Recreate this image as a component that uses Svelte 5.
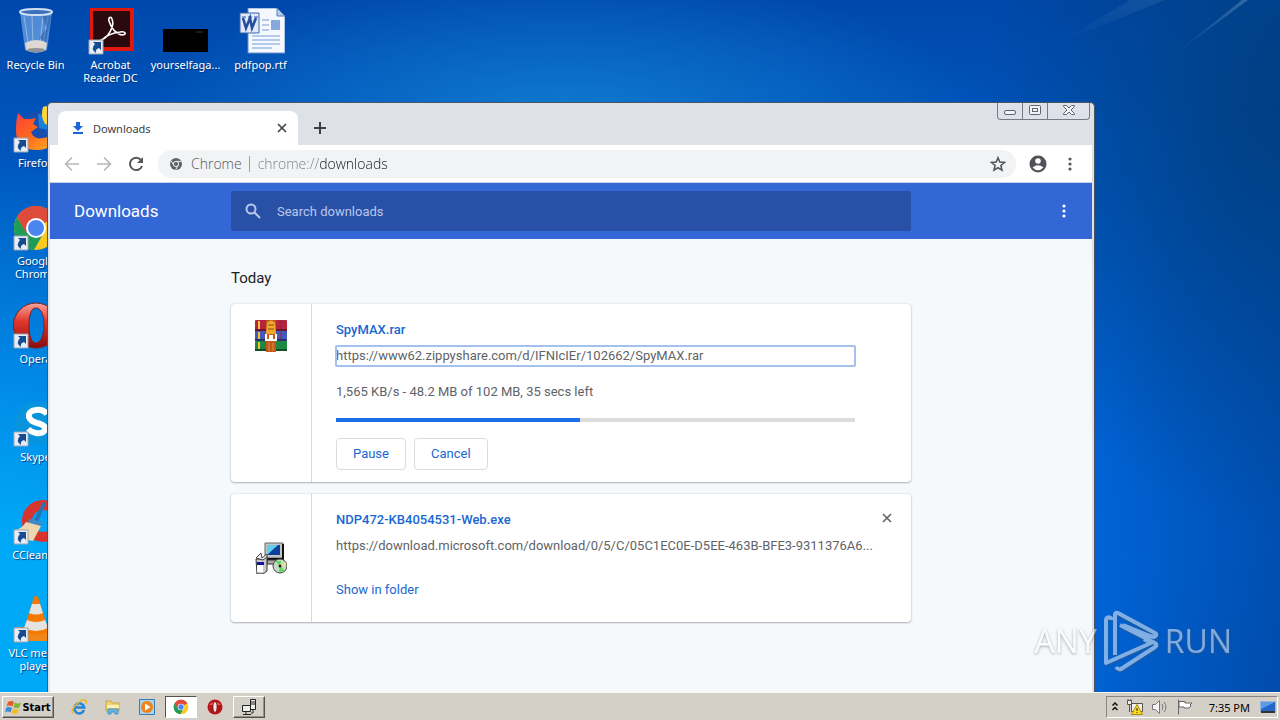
<script lang="ts">
	type Item = { id: string; label: string; shortcut?: boolean };

	const column: Item[] = [
		{ id: 'bin', label: 'Recycle Bin' },
		{ id: 'firefox', label: 'Firefox', shortcut: true },
		{ id: 'chrome', label: 'Google Chrome', shortcut: true },
		{ id: 'opera', label: 'Opera', shortcut: true },
		{ id: 'skype', label: 'Skype', shortcut: true },
		{ id: 'ccleaner', label: 'CCleaner', shortcut: true },
		{ id: 'vlc', label: 'VLC media player', shortcut: true }
	];
	const row: Item[] = [
		{ id: 'acrobat', label: 'Acrobat Reader DC', shortcut: true },
		{ id: 'black', label: 'yourselfaga...' },
		{ id: 'word', label: 'pdfpop.rtf' }
	];
	const quickLaunch = [
		{ id: 'ie', label: 'Internet Explorer' },
		{ id: 'explorer', label: 'Explorer' },
		{ id: 'media', label: 'Media Player' },
		{ id: 'chrome', label: 'Chrome', state: 'pressed' },
		{ id: 'opera', label: 'Opera' },
		{ id: 'network', label: 'Network', state: 'raised' }
	];

	let address = $state('chrome://downloads');
	let query = $state('');
	let paused = $state(false);
	let progress = $state(47);
</script>

{#snippet chromeLogo()}
	<circle cx="24" cy="24" r="22" fill="#fbc91f" />
	<path d="M24 24 5 13A22 22 0 0 1 43 13z" fill="#de4b3b" />
	<path d="M5 13A22 22 0 0 0 22 46l9-16-7-6-9 5z" fill="#1f9d58" />
	<path d="M24 13h19A22 22 0 0 0 5 13l9 16z" fill="#de4b3b" />
	<circle cx="24" cy="24" r="10" fill="#fff" />
	<circle cx="24" cy="24" r="8" fill="#4b86f0" />
{/snippet}

{#snippet desktopItem(item: Item)}
	<button class="item">
		<svg width="48" height="48" viewBox="0 0 48 48" aria-hidden="true">
			{#if item.id === 'bin'}
				<path d="M8 4h32l-5 38q-11 5-22 0z" fill="#6ea2e2" opacity=".75" />
				<path d="M12 8l4 27M20 8l1 28M31 8l-3 28M36 8l-5 28" stroke="#bcd5f2" opacity=".6" />
				<path d="M30 8h9l-5 26-7-4 8-10z" fill="#204f9b" opacity=".45" />
				<path d="M13 35q11-6 22 0l-1 7q-10 5-20 0z" fill="#ddd9d2" />
				<ellipse cx="24" cy="42" rx="9" ry="2" fill="#8f9194" />
				<ellipse cx="24" cy="4" rx="16" ry="3" fill="#3c70bd" stroke="#cfe0f2" stroke-width="2" />
			{:else if item.id === 'acrobat'}
				<path d="M3 0h44v43H3z" fill="#e0190f" />
				<path d="M6 3h37v36H6z" fill="#2a0a0d" />
				<path
					d="M14 32c7-2 14-14 11-21-1-3-4-2-3 2 2 7 7 13 13 14 5 0 4-4-2-3-7 1-13 3-17 7-2 2-3 3-2 1z"
					fill="none"
					stroke="#fff"
					stroke-width="1.6"
				/>
			{:else if item.id === 'black'}
				<path d="M1 21h45v23H1z" fill="#000" />
				<path d="M34 24h7" stroke="#343434" />
			{:else if item.id === 'word'}
				<path d="M11 0h29l8 8v37H11z" fill="#f4f8ff" stroke="#6b92cf" />
				<path d="M40 0v8h8z" fill="#b8cdef" stroke="#557db8" />
				<path d="M25 12h7M25 17h7M25 22h7M15 28h28M15 32h28M15 36h28M15 40h20" stroke="#779bd0" />
				<path d="M34 12h9v10h-9z" fill="#86a9df" />
				<path d="M3 5h19v20H3z" fill="#e1e9f8" stroke="#3d64a8" />
				<path d="M6 10l3 10 4-10 2 10 4-10" fill="none" stroke="#254f9d" stroke-width="2.600" />
				<path d="M5 9h4M11 9h4M17 9h4" stroke="#254f9d" />
			{:else if item.id === 'firefox'}
				<circle cx="27" cy="23" r="18" fill="#164fae" />
				<path d="M26 8q10-1 16 8l-6 8-9-2z" fill="#1b7fd6" />
				<path d="M31 1q-3 9 2 17l13 5Q47 5 34 0z" fill="#ffd43a" />
				<path
					d="M6 7l6 6h7l5-1-3 6 5 3-7 5q3 8 12 6 8-1 15-8-2 20-21 20Q4 44 4 25 4 13 6 7z"
					fill="url(#fire)"
				/>
			{:else if item.id === 'chrome'}
				{@render chromeLogo()}
			{:else if item.id === 'opera'}
				<path
					fill-rule="evenodd"
					d="M24 1a22 22 0 0 1 0 45 22 22 0 0 1 0-45zm0 5c-5 0-7 7-7 17s2 18 7 18 8-8 8-18-3-17-8-17z"
					fill="url(#operaRed)"
					stroke="#8c1a14"
				/>
			{:else if item.id === 'skype'}
				<rect x="4" y="2" width="42" height="42" rx="17" fill="#0794dd" />
				<path
					d="M35 14q-4-5-11-4-8 1-7 7 1 4 8 6 9 2 8 7-2 4-9 3-5-1-8-4"
					fill="none"
					stroke="#fff"
					stroke-width="6"
				/>
			{:else if item.id === 'ccleaner'}
				<circle cx="31" cy="23" r="16" fill="none" stroke="#d8332e" stroke-width="10" />
				<path d="M31 4l3 1-8 19-4-2z" fill="#2474b8" />
				<path d="M17 21l14 3-2 6-13-4z" fill="#3d8bc5" />
				<path d="M14 24l15 4-8 15q-12-1-19-11 8-1 12-8z" fill="#efd6ac" />
			{:else if item.id === 'vlc'}
				<path d="M5 31h38l4 14H2z" fill="#f08519" />
				<path d="M22 1q2-2 4 0l11 35q-13 5-26 0z" fill="#f57900" />
				<path d="M20 8h8l3 9q-7 3-14 0zM15 24q9 4 18 0l3 8q-12 6-24 0z" fill="#e5e3df" />
			{/if}
			{#if item.shortcut}
				<path d="M2 32h14v14H2z" fill="#e6edf7" stroke="#9ba5b3" />
				<path d="M6 34h8v8l-2-2q-4 1-3 5-6-4-1-9z" fill="#164a91" />
			{/if}
		</svg>
		<span>{item.label}</span>
	</button>
{/snippet}

{#snippet dots()}
	<svg width="16" height="16" viewBox="0 0 16 16" fill="currentColor" aria-hidden="true">
		<circle cx="8" cy="3" r="1.600" /><circle cx="8" cy="8" r="1.600" /><circle cx="8" cy="13" r="1.600" />
	</svg>
{/snippet}

{#snippet cross()}
	<svg width="10" height="10" viewBox="0 0 10 10" aria-hidden="true">
		<path d="M1 1l8 8M9 1L1 9" stroke="currentColor" stroke-width="1.600" />
	</svg>
{/snippet}

<svg class="defs" aria-hidden="true">
	<defs>
		<linearGradient id="operaRed" x1="0" y1="0" x2="0" y2="1">
			<stop offset="0" stop-color="#f7a7a0" />
			<stop offset=".4" stop-color="#e2382d" />
			<stop offset="1" stop-color="#8a0c0c" />
		</linearGradient>
		<linearGradient id="fire" x1="0" y1="0" x2="1" y2="1">
			<stop offset="0" stop-color="#ff3d3d" />
			<stop offset=".5" stop-color="#ff6b18" />
			<stop offset="1" stop-color="#ffb92d" />
		</linearGradient>
		<linearGradient id="ray" x1="1" y1="0" x2="0" y2="1">
			<stop offset="0" stop-color="#5f90bd" stop-opacity=".5" />
			<stop offset="1" stop-color="#5f90bd" stop-opacity="0" />
		</linearGradient>
	</defs>
</svg>

<div class="screen">
	<div class="desktop">
		<svg class="streaks" width="280" height="110" viewBox="0 0 280 110" aria-hidden="true">
			<path d="M248 0h-6L170 58z" fill="url(#ray)" />
			<path d="M165 0h-35L60 42z" fill="url(#ray)" opacity=".4" />
		</svg>
		<div class="items">
			<div class="column">
				{#each column as item}{@render desktopItem(item)}{/each}
			</div>
			{#each row as item}{@render desktopItem(item)}{/each}
		</div>

		<section class="window">
			<div class="tabstrip">
				<div class="tab">
					<svg width="12" height="12" viewBox="0 0 12 12" fill="#1a66d8" aria-hidden="true">
						<path d="M4 0h4v4h3L6 9 1 4h3zM1 10h10v2H1z" />
					</svg>
					<span>Downloads</span>
					<button aria-label="Close tab">{@render cross()}</button>
				</div>
				<button class="newtab" aria-label="New tab">
					<svg width="12" height="12" viewBox="0 0 12 12" aria-hidden="true">
						<path d="M6 0v12M0 6h12" stroke="#3c4043" stroke-width="2" />
					</svg>
				</button>
				<div class="caption">
					<button aria-label="Minimize">
						<svg width="12" height="16" viewBox="0 0 12 16"><rect x=".5" y="7.500" width="11" height="4" rx="1.500" /></svg>
					</button>
					<button aria-label="Restore">
						<svg width="12" height="16" viewBox="0 0 12 16">
							<rect x=".5" y="2.500" width="11" height="9" rx="1" /><rect x="3.500" y="5.500" width="5" height="3" />
						</svg>
					</button>
					<button class="close" aria-label="Close">
						<svg width="12" height="16" viewBox="0 0 12 16">
							<path d="M.5 2.500h3L6 5l2.500-2.500h3v1L8 7l3.500 3.500v1h-3L6 9l-2.500 2.500h-3v-1L4 7 .5 3.500z" />
						</svg>
					</button>
				</div>
			</div>

			<div class="toolbar">
				<div class="nav">
					<button class="off" aria-label="Back">
						<svg width="16" height="16" viewBox="0 0 16 16"><path d="M15 8H2M8 1.500L1.500 8 8 14.500" /></svg>
					</button>
					<button class="off" aria-label="Forward">
						<svg width="16" height="16" viewBox="0 0 16 16"><path d="M1 8h13M8 1.500L14.500 8 8 14.500" /></svg>
					</button>
					<button aria-label="Reload">
						<svg width="16" height="16" viewBox="0 0 16 16">
							<path d="M13 4A6.200 6.200 0 1 0 14 10" stroke-width="2" />
							<path d="M15 1v6H9z" fill="currentColor" stroke="none" />
						</svg>
					</button>
				</div>
				<div class="omnibox">
					<svg width="12" height="12" viewBox="0 0 12 12" aria-hidden="true">
						<circle cx="6" cy="6" r="6" fill="#5f6368" />
						<circle cx="6" cy="6" r="2.600" fill="none" stroke="#f1f3f4" />
						<path d="M6 3.400h5M3.800 7.300L1.300 3M8.200 7.300L5.700 11.700" stroke="#f1f3f4" />
					</svg>
					<span class="scheme">Chrome</span>
					<input aria-label="Address" bind:value={address} />
					<button aria-label="Bookmark">
						<svg width="16" height="16" viewBox="0 0 16 16">
							<path d="M8 1.800l1.800 4.300 4.700.4-3.600 3 1.100 4.600L8 11.700l-4 2.400 1.100-4.600-3.600-3 4.700-.4z" />
						</svg>
					</button>
				</div>
				<div class="nav">
					<button aria-label="Profile">
						<svg width="18" height="18" viewBox="0 0 18 18">
							<circle cx="9" cy="9" r="8.500" fill="#4f5256" stroke="none" />
							<circle cx="9" cy="6" r="2.800" fill="#fff" stroke="none" />
							<path d="M3.500 12.500q5.500-4.500 11 0Q9 18 3.500 12.500z" fill="#fff" stroke="none" />
						</svg>
					</button>
					<button class="menu" aria-label="Chrome menu">{@render dots()}</button>
				</div>
			</div>

			<header>
				<h1>Downloads</h1>
				<label class="search">
					<svg width="16" height="16" viewBox="0 0 16 16" aria-hidden="true">
						<circle cx="6" cy="6" r="4.500" fill="none" stroke="currentColor" stroke-width="2" />
						<path d="M9.500 9.500L15 15" stroke="currentColor" stroke-width="2" />
					</svg>
					<input type="text" placeholder="Search downloads" aria-label="Search downloads" bind:value={query} />
				</label>
				<button class="more" aria-label="More actions">{@render dots()}</button>
			</header>

			<main>
				<h2>Today</h2>
				<article>
					<div class="file">
						<svg width="32" height="32" viewBox="0 0 32 32" aria-hidden="true">
							<rect width="32" height="11" rx="1" fill="#b5233f" />
							<rect y="11" width="32" height="10" fill="#4558b8" />
							<rect y="21" width="32" height="10" rx="1" fill="#1e8741" />
							<path d="M0 9h32v2H0z" fill="#6b1230" />
							<path d="M0 19h32v2H0z" fill="#27306f" />
							<path d="M0 29h32v2H0z" fill="#104d29" />
							<path d="M3 1h2v8H3zM3 12h2v7H3zM3 22h2v7H3z" fill="#f0c531" />
							<path d="M25 1h2v8h-2zM25 12h2v7h-2z" fill="#8c2346" opacity=".5" />
							<path d="M11 0h10v32H11z" fill="#c15a1b" />
							<path d="M12 3q4-5 8 0l1 11H11z" fill="#f0a92b" />
							<path d="M13 5h6M13 9h6" stroke="#8d4a13" />
							<path d="M11 14v6h4v-4h2v4h4v-6" fill="none" stroke="#fff" stroke-width="2" />
							<path d="M14 23v8M18 23v8" stroke="#e19043" />
						</svg>
					</div>
					<div class="info">
						<a class="name" href="#spymax">SpyMAX.rar</a>
						<a class="url focus" href="#spymax">https://www62.zippyshare.com/d/IFNIcIEr/102662/SpyMAX.rar</a>
						<p>1,565 KB/s - 48.2 MB of 102 MB, 35 secs left</p>
						<div class="bar" role="progressbar" aria-label="SpyMAX.rar" aria-valuenow={progress}>
							<div style="width: {progress}%"></div>
						</div>
						<div class="actions">
							<button onclick={() => (paused = !paused)}>{paused ? 'Resume' : 'Pause'}</button>
							<button onclick={() => (progress = 0)}>Cancel</button>
						</div>
					</div>
				</article>

				<article>
					<div class="file centered">
						<svg width="32" height="32" viewBox="0 0 32 32" aria-hidden="true">
							<path d="M10 1h18v15H10z" fill="#c4c4c4" stroke="#666" />
							<path d="M12 3h13v10H12z" fill="#0b3f9c" />
							<path d="M12 3h11L12 13z" fill="#5fd0ea" />
							<path d="M28 2v15H11" fill="none" stroke="#111" stroke-width="2" />
							<path d="M12 18h15v4H12z" fill="#aaa" stroke="#333" />
							<path d="M1 17h8l3-3v15l-4 3H2z" fill="#c9c9c9" stroke="#333" />
							<path d="M2 22h6v8H2z" fill="#fff" />
							<path d="M2 20h7v3H2z" fill="#1414a0" />
							<path d="M1 16l5-5 1 5 5-4v3l-4 3z" fill="#eee" stroke="#444" />
							<circle cx="25" cy="24" r="7" fill="#c8d8c4" stroke="#444" />
							<path d="M25 24l-5-5h6zM25 24l5 5-6 1z" fill="#57dd5a" />
							<path d="M25 24l6-4v4z" fill="#ece77d" />
							<circle cx="25" cy="24" r="1.500" fill="#222" />
						</svg>
					</div>
					<div class="info">
						<a class="name" href="#ndp">NDP472-KB4054531-Web.exe</a>
						<a class="url" href="#ndp">https://download.microsoft.com/download/0/5/C/05C1EC0E-D5EE-463B-BFE3-9311376A6...</a>
						<a class="show" href="#folder">Show in folder</a>
					</div>
					<button class="remove" aria-label="Remove from list">{@render cross()}</button>
				</article>
			</main>
		</section>
	</div>

	<footer>
		<button class="start">
			<svg width="16" height="16" viewBox="0 0 16 16" aria-hidden="true">
				<path d="M3 3q3-2 6 0L7.500 7.500q-3-2-6 0z" fill="#e75b24" />
				<path d="M10 3.500q3 2 6 0L14.500 8q-3 2-6 0z" fill="#7cb82f" />
				<path d="M1 9q3-2 6 0l-1.500 4.500q-3-2-5.500 0z" fill="#3c8bd8" />
				<path d="M8 9.500q3 2 6 0L12.500 14q-3 2-6 0z" fill="#f3bd20" />
			</svg>
			Start
		</button>
		<div class="launch">
			{#each quickLaunch as app}
				<button class={app.state} aria-label={app.label}>
					{#if app.id === 'chrome'}
						<svg width="16" height="16" viewBox="0 0 48 48">{@render chromeLogo()}</svg>
					{:else if app.id === 'opera'}
						<svg width="16" height="16" viewBox="0 0 16 16">
							<circle cx="8" cy="8" r="7.500" fill="#b8151b" />
							<path d="M2 6q6-6 12 0z" fill="#e7645f" />
							<ellipse cx="8" cy="8" rx="2.200" ry="5.500" fill="#f4e5e3" stroke="#7a0c10" />
						</svg>
					{:else if app.id === 'ie'}
						<svg width="16" height="16" viewBox="0 0 16 16">
							<path d="M13 11A5 5 0 1 1 13.200 8.500H4" fill="none" stroke="#2484d8" stroke-width="2.500" />
							<path d="M2 14.500Q-1 12 5 6t9-5q2 0 1 4" fill="none" stroke="#edb827" stroke-width="1.500" />
						</svg>
					{:else if app.id === 'explorer'}
						<svg width="16" height="16" viewBox="0 0 16 16">
							<path d="M1 2h5l1 2h7v8H1z" fill="#f1d273" stroke="#c9a545" />
							<path d="M2 6h12v3H2z" fill="#fbf0b4" />
							<path d="M3 15v-5h10v5h-3v-2H6v2z" fill="#67b7e3" stroke="#4692c3" />
						</svg>
					{:else if app.id === 'media'}
						<svg width="16" height="16" viewBox="0 0 16 16">
							<path d="M.5.5h15v15H.5z" fill="#a9d3ee" stroke="#3a7db4" />
							<circle cx="8" cy="8" r="6" fill="#ee8417" />
							<path d="M6 4.500L11.500 8 6 11.500z" fill="#fff" />
						</svg>
					{:else}
						<svg width="16" height="16" viewBox="0 0 16 16" fill="#eee" stroke="#222">
							<path d="M9.500.5h5v10h-5zM10 3h4M10 5h4M1.500 6.500h8v6h-8zM5 13v2M2 15.500h8M12 11v3h-2" />
						</svg>
					{/if}
				</button>
			{/each}
		</div>
		<div class="tray">
			<button aria-label="Show hidden icons">
				<svg width="8" height="12" viewBox="0 0 8 12" fill="none" stroke="#111" stroke-width="1.500">
					<path d="M1.500 4.500L4 2l2.500 2.500M1.500 9L4 6.500 6.500 9" />
				</svg>
			</button>
			<svg width="16" height="16" viewBox="0 0 16 16" fill="#eee" stroke="#555">
				<path d="M4.500 4.500h11v8h-11zM2.500 5v8M.5 1.500h4v4h-4zM1 1V0M4 1V0" />
				<path d="M10 5.500l5.500 10h-11z" fill="#ffd91c" stroke="#a88b12" />
				<path d="M10 9v3M10 13v1" stroke="#222" />
			</svg>
			<svg width="18" height="16" viewBox="0 0 18 16" fill="#f6f6f6" stroke="#777">
				<path d="M1.500 5.500h3l4-4v13l-4-4h-3z" />
				<path d="M11 5q2 3 0 6M13 3q4 5 0 10" fill="none" />
			</svg>
			<svg width="16" height="16" viewBox="0 0 16 16" fill="#fff" stroke="#666">
				<path d="M1.500.5v15M2 2.500h6v1.500h7l-2 2 1 1-2 2H7V8H2z" />
			</svg>
			<time>7:35 PM</time>
			<svg width="16" height="14" viewBox="0 0 16 14">
				<path d="M.5 1.500h15v10H.5z" fill="#2267c8" stroke="#9cb4d6" />
				<path d="M1 2h14L1 9z" fill="#5c9be8" />
				<path d="M1 12h14" stroke="#333" stroke-width="2" />
			</svg>
		</div>
	</footer>

	<div class="watermark">
		<span>ANY</span>
		<svg width="56" height="62" viewBox="0 0 56 62" aria-hidden="true">
			<path d="M8 10V8q-5-2-5 2v43l45-20-7-4M12 45V5q0-3 3-2l37 20q3 2-1 4l-4-1-27-11M17 15l35 18q3 2 0 4L18 59q-3 1-5-2" />
		</svg>
		<span>RUN</span>
	</div>
</div>

<style>
	:global(body) {
		margin: 0;
	}

	.screen {
		position: relative;
		display: flex;
		flex-direction: column;
		height: 100vh;
		overflow: hidden;
		font: 11px/13px 'Noto Sans', sans-serif;
	}

	button {
		display: flex;
		align-items: center;
		justify-content: center;
		padding: 0;
		border: 0;
		background: none;
		color: inherit;
		font: inherit;
	}

	input {
		min-width: 0;
		padding: 0;
		border: 0;
		outline: 0;
		background: none;
		font: inherit;
	}

	a {
		text-decoration: none;
	}

	.defs {
		position: absolute;
		width: 0;
		height: 0;
	}

	.desktop {
		position: relative;
		flex: 1;
		min-height: 0;
		overflow: hidden;
		background:
			radial-gradient(ellipse 420px 150px at 44% 120px, #0f7bd0, transparent),
			radial-gradient(ellipse 300px 420px at 100% 110px, #003f82, transparent),
			radial-gradient(ellipse 330px 480px at 0% 92%, #00a9f8 20%, transparent),
			linear-gradient(100deg, transparent 84%, #00429a 106%),
			linear-gradient(180deg, #0048ab, #0055bc 20%, #0066da 80%);
	}

	.streaks {
		position: absolute;
		top: 0;
		right: 0;
	}

	.items {
		display: flex;
		align-items: flex-start;
		padding-top: 8px;
		margin-left: -2px;
	}

	.column {
		display: flex;
		flex-direction: column;
	}

	.item {
		flex-direction: column;
		justify-content: flex-start;
		gap: 2px;
		width: 75px;
		height: 98px;
		color: #fff;
		text-align: center;
		text-shadow: 1px 1px 1px #003a80;
	}

	.item span {
		max-width: 70px;
	}

	.window {
		position: absolute;
		top: 102px;
		right: 185px;
		bottom: 0;
		left: 47px;
		display: flex;
		flex-direction: column;
		padding: 0 2px;
		border: 1px solid #4c5662;
		border-bottom: 0;
		border-radius: 5px 5px 0 0;
		background: #dee1e8;
	}

	.tabstrip {
		display: flex;
		align-items: flex-end;
		height: 42px;
		padding-left: 8px;
		color: #3c4043;
	}

	.tab {
		display: flex;
		align-items: center;
		box-sizing: border-box;
		width: 240px;
		height: 34px;
		padding: 0 11px 0 14px;
		border-radius: 8px 8px 0 0;
		background: #fff;
	}

	.tab span {
		flex: 1;
		margin-left: 9px;
	}

	.newtab {
		width: 28px;
		height: 34px;
		margin-left: 8px;
	}

	.caption {
		display: flex;
		align-self: flex-start;
		margin: 0 2px 0 auto;
		border: 1px solid #737b87;
		border-top: 0;
		border-radius: 0 0 4px 4px;
	}

	.caption button {
		width: 25px;
		height: 16px;
		border-right: 1px solid #737b87;
	}

	.caption .close {
		width: 41px;
		border: 0;
	}

	.caption svg {
		fill: #f1f3f6;
		stroke: #5d6570;
	}

	.toolbar {
		display: flex;
		align-items: center;
		gap: 6px;
		height: 37px;
		padding: 0 6px;
		border-bottom: 1px solid #c9d2e4;
		background: #fff;
		color: #54575b;
	}

	.nav {
		display: flex;
	}

	.nav button {
		width: 32px;
		height: 28px;
	}

	.nav svg,
	.omnibox button svg {
		fill: none;
		stroke: currentColor;
		stroke-width: 1.6;
	}

	.nav .menu svg {
		fill: currentColor;
		stroke: none;
	}

	.nav .off {
		color: #b4b6b9;
	}

	.omnibox {
		display: flex;
		flex: 1;
		align-items: center;
		height: 28px;
		padding: 0 10px 0 12px;
		border-radius: 14px;
		background: #f1f3f4;
		font: 300 14px/20px 'Open Sans', sans-serif;
	}

	.scheme {
		margin-left: 9px;
		padding-right: 7px;
		border-right: 1px solid #9a9da1;
		line-height: 16px;
	}

	.omnibox input {
		flex: 1;
		margin-left: 8px;
		/* grey scheme, dark host */
		background: linear-gradient(90deg, #7b7e82 62px, #17181a 62px);
		background-clip: text;
		color: transparent;
		caret-color: #17181a;
	}

	header {
		display: grid;
		grid-template-columns: minmax(110px, 1fr) minmax(0, 680px) minmax(56px, 1fr);
		align-items: center;
		height: 56px;
		background: #3367d6;
		color: #fff;
		font-family: Roboto, sans-serif;
	}

	h1 {
		margin: 0 0 0 24px;
		font-size: 17px;
		font-weight: 400;
		line-height: 20px;
	}

	.search {
		display: flex;
		align-items: center;
		gap: 16px;
		height: 40px;
		padding: 0 14px;
		border-radius: 2px;
		background: #2950a7;
		color: #b8c8ec;
		font-size: 13px;
	}

	.search input {
		flex: 1;
		color: #fff;
	}

	.search input::placeholder {
		color: #b8c8ec;
		opacity: 1;
	}

	.more {
		justify-self: end;
		width: 32px;
		height: 32px;
		margin-right: 12px;
	}

	main {
		flex: 1;
		padding: 29px 24px 0;
		background: #f5f9fc;
		color: #5f6368;
		font: 13px/20px Roboto, sans-serif;
	}

	h2 {
		max-width: 680px;
		margin: 0 auto 16px;
		color: #202124;
		font-size: 15px;
		font-weight: 400;
		line-height: 20px;
	}

	article {
		display: flex;
		position: relative;
		max-width: 680px;
		margin: 0 auto 12px;
		border-radius: 4px;
		background: #fff;
		box-shadow:
			0 1px 2px rgba(60, 64, 67, 0.35),
			0 0 2px rgba(60, 64, 67, 0.2);
	}

	.file {
		display: flex;
		flex: none;
		justify-content: center;
		width: 80px;
		padding-top: 16px;
		border-right: 1px solid #d8dade;
	}

	.centered {
		align-items: center;
		padding: 0;
	}

	.info {
		display: flex;
		flex: 1;
		flex-direction: column;
		align-items: flex-start;
		min-width: 0;
		padding: 16px 56px 12px 24px;
	}

	.name {
		margin-bottom: 6px;
		color: #1967d2;
		font-weight: 500;
	}

	.url {
		align-self: stretch;
		color: #5f6368;
		white-space: nowrap;
	}

	.focus {
		border-radius: 1px;
		outline: 2px solid #a3c0ef;
		outline-offset: -1px;
	}

	p {
		margin: 16px 0;
	}

	.bar {
		align-self: stretch;
		height: 4px;
		background: #dcdcdc;
	}

	.bar div {
		height: 4px;
		background: #1a6fe8;
	}

	.actions {
		display: flex;
		gap: 8px;
		margin-top: 16px;
	}

	.actions button {
		height: 32px;
		padding: 0 16px;
		border: 1px solid #d8dbe0;
		border-radius: 4px;
		color: #1967d2;
	}

	.show {
		margin: 24px 0 10px;
		color: #1967d2;
	}

	.remove {
		position: absolute;
		top: 12px;
		right: 12px;
		width: 24px;
		height: 24px;
	}

	footer {
		display: flex;
		flex: none;
		align-items: center;
		box-sizing: border-box;
		height: 28px;
		padding: 2px 2px 1px;
		border-top: 1px solid #f6f5f2;
		background: #d4d0c8;
	}

	.start {
		gap: 1px;
		box-sizing: border-box;
		width: 52px;
		height: 22px;
		border: 1px solid;
		border-color: #fff #55524d #55524d #fff;
		box-shadow: inset -1px -1px #96928b;
		font: bold 11px/13px 'DejaVu Sans Condensed', sans-serif;
	}

	.launch {
		display: flex;
		gap: 2px;
		margin-left: 9px;
	}

	.launch button {
		box-sizing: border-box;
		width: 32px;
		height: 22px;
	}

	.launch .pressed {
		border: 1px solid;
		border-color: #55524d #fff #fff #55524d;
		background: #fff;
	}

	.launch .raised {
		border: 1px solid;
		border-color: #fff #55524d #55524d #fff;
		box-shadow: inset -1px -1px #96928b;
	}

	.tray {
		display: flex;
		align-items: center;
		gap: 8px;
		box-sizing: border-box;
		height: 22px;
		margin-left: auto;
		padding: 0 1px 0 4px;
		border: 1px solid;
		border-color: #8b8780 #fff #fff #8b8780;
	}

	time {
		margin: 0 2px 0 8px;
	}

	.watermark {
		position: absolute;
		right: 48px;
		bottom: 48px;
		display: flex;
		align-items: center;
		gap: 6px;
		color: #fff;
		font: 32px/40px 'Open Sans', sans-serif;
		opacity: 0.5;
		pointer-events: none;
		text-shadow: 0 1px 3px #555;
	}

	.watermark svg {
		fill: none;
		stroke: currentColor;
		stroke-width: 4;
		stroke-linejoin: round;
		filter: drop-shadow(0 1px 1px #555);
	}
</style>
